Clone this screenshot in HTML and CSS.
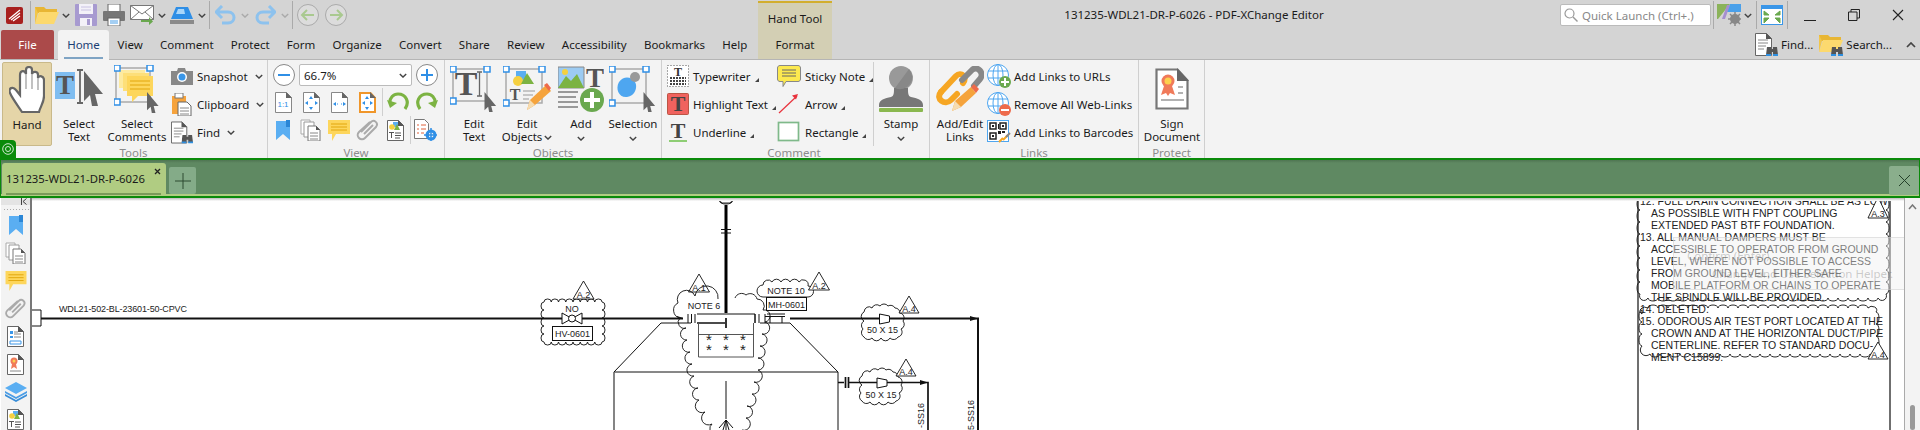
FILE: index.html
```html
<!DOCTYPE html>
<html lang="en">
<head>
    <meta charset="UTF-8">
    <title>131235-WDL21-DR-P-6026 - PDF-XChange Editor</title>
    <link rel="stylesheet" href="styles.css">
</head>
<body>
    <svg class="defs">
        <symbol id="chev" viewBox="0 0 10 6"><polyline points="1,1 5,5 9,1" fill="none" stroke="#444" stroke-width="1.7"/></symbol>
        <symbol id="chev-pale" viewBox="0 0 10 6"><polyline points="1,1 5,5 9,1" fill="none" stroke="#aaa" stroke-width="1.7"/></symbol>
        <symbol id="corner" viewBox="0 0 4 4"><polygon points="4,0 4,4 0,4" fill="#444"/></symbol>
        <symbol id="cursor" viewBox="0 0 20 36"><polygon points="1,0 20,23 12,23 15,35 9,35 7,24 1,30" fill="#666"/></symbol>
        <symbol id="binoc" viewBox="0 0 12 12"><path d="M1 3h4v2h2V3h4l1 8H7V8H5v3H0z" fill="#555"/><path d="M0 10h5v2H0zM7 10h5v2H7z" fill="#2e8fe0"/></symbol>
        <symbol id="bookmark" viewBox="0 0 14 20"><polygon points="0,1 14,1 14,20 7,14 0,20" fill="#5aaef2"/><polygon points="10,0 14,0 14,7 10,7" fill="#2a86d6"/></symbol>
        <symbol id="pages" viewBox="0 0 22 22"><path d="M1 1h9v14H1z" fill="#fff" stroke="#aaa"/><path d="M4 3h10v15H4z" fill="#fff" stroke="#999"/><path d="M8 7h8l4 4v11H8z" fill="#fff" stroke="#777"/><path d="M10 14h8M10 17h8M10 20h8" stroke="#888"/><path d="M16 7l4 4h-4z" fill="#555"/></symbol>
        <symbol id="note" viewBox="0 0 22 21"><path d="M0 0h22v14H8l-4 7v-7H0z" fill="#fdd65c"/><path d="M3 4h16M3 7h16M3 10h16" stroke="#e2a60c"/></symbol>
        <symbol id="clip" viewBox="0 0 23 22"><path d="M5 13l10-10c3-3 8 1 5 5L9 19c-4 4-10-2-6-6L14 3M8 15l9-9" fill="none" stroke="#aaa" stroke-width="2"/></symbol>
        <symbol id="form-doc" viewBox="0 0 17 21"><path d="M.5.5h11l5 5v15H.5z" fill="#fff" stroke="#666"/><path d="M11 0l6 6h-6z" fill="#555"/><path d="M3 5h3v3H3zM3 10h3v2H3z" fill="#3a96e8"/><path d="M7 6h4M7 8h7M7 11h7" stroke="#888"/><path d="M3 15h11v3H3z" fill="#fff" stroke="#3a96e8"/></symbol>
        <symbol id="cert-doc" viewBox="0 0 17 21"><path d="M.5.5h11l5 5v15H.5z" fill="#fff" stroke="#666"/><path d="M11 0l6 6h-6z" fill="#555"/><circle cx="7" cy="7" r="3.5" fill="#f07a5a"/><circle cx="7" cy="7" r="1.5" fill="#fcd04e"/><path d="M5 10l-1 5 3-2 3 2-1-5z" fill="#f07a5a"/><path d="M3 17h11" stroke="#888"/></symbol>
        <symbol id="shapes-doc" viewBox="0 0 17 21"><path d="M.5.5h11l5 5v15H.5z" fill="#fff" stroke="#666"/><path d="M11 0l6 6h-6z" fill="#555"/><rect x="6" y="2" width="5" height="5" fill="#5aaef2"/><circle cx="5" cy="7" r="2.800" fill="#f5d040"/><polygon points="7,10 10,4 13,10" fill="#7cb342"/><path d="M2 12.500h5M4.500 12.500v5.500M8 13h6M8 15.500h6M8 18h5" stroke="#555"/></symbol>
    </svg>

    <div class="top">
        <div class="titlebar">
            <div class="qat">
                <svg class="logo" width="17" height="17" viewBox="0 0 17 17"><rect width="17" height="17" rx="2" fill="#a8201f"/><path d="M3 12L14 3M5 13l9-7M7 14l7-5" stroke="#fff" stroke-width="1.3"/></svg>
                <span class="qat-sep first"></span>
                <svg class="qat-icon folder" width="24" height="20" viewBox="0 0 24 20"><path d="M0 2h9l2 2h11v4H0z" fill="#e8b634"/><path d="M0 19L4 7h20l-5 12z" fill="#fcd96e"/><path d="M0 2v17l3-11z" fill="#f2c64a"/></svg>
                <svg class="mini" width="8" height="5"><use href="#chev"/></svg>
                <svg class="qat-icon save" width="22" height="22" viewBox="0 0 22 22"><rect width="22" height="22" rx="1" fill="#a79ad0"/><rect x="4" y="0" width="14" height="10" fill="#f3f1f8"/><path d="M6 3h10M6 6h10" stroke="#c9c2e2"/><rect x="5" y="14" width="12" height="8" fill="#f3f1f8"/><rect x="12" y="15" width="3" height="6" fill="#a79ad0"/></svg>
                <svg class="qat-icon print" width="22" height="22" viewBox="0 0 22 22"><rect x="5" y="0" width="12" height="8" fill="#fff" stroke="#666"/><rect x="0" y="7" width="22" height="10" rx="1" fill="#777"/><rect x="5" y="14" width="12" height="8" fill="#fff" stroke="#666"/><path d="M7 17h8M7 19h8" stroke="#4a9fe8"/></svg>
                <svg class="qat-icon mail" width="24" height="20" viewBox="0 0 24 20"><path d="M.5.5h23v14H.5z" fill="#fff" stroke="#777"/><path d="M.5.5L12 9 23.5.5M.5 14.5L9 7M23.5 14.5L15 7" fill="none" stroke="#777"/><path d="M11 15h8v-3l4 4.500-4 3.500v-3h-8z" fill="#6aa84f"/></svg>
                <svg class="mini" width="8" height="5"><use href="#chev"/></svg>
                <svg class="qat-icon cloud" width="24" height="17" viewBox="0 0 24 17"><path d="M6 0h12l5 12H1z" fill="#2e8ee6"/><path d="M8 2h6l1 5H6z" fill="#a9d6fa"/><rect x="0" y="13" width="24" height="4" fill="#8a8a8a"/></svg>
                <svg class="mini" width="8" height="5"><use href="#chev"/></svg>
                <span class="qat-sep"></span>
                <svg class="qat-icon undo" width="21" height="20" viewBox="0 0 21 20"><path d="M1 7h12c8 0 8 11 0 11H7M7 1L1 7l6 6" fill="none" stroke="#8dc2ee" stroke-width="3"/></svg>
                <svg class="mini" width="8" height="5"><use href="#chev-pale"/></svg>
                <svg class="qat-icon redo" width="21" height="20" viewBox="0 0 21 20"><path d="M20 7H8C0 7 0 18 8 18h6M14 1l6 6-6 6" fill="none" stroke="#8dc2ee" stroke-width="3"/></svg>
                <svg class="mini" width="8" height="5"><use href="#chev-pale"/></svg>
                <span class="qat-sep"></span>
                <svg class="qat-icon back" width="22" height="22" viewBox="0 0 22 22"><circle cx="11" cy="11" r="10.500" fill="#dcdcdc" stroke="#aaa"/><path d="M17 11H6M10 6l-5 5 5 5" fill="none" stroke="#a9c98f" stroke-width="2"/></svg>
                <svg class="qat-icon fwd" width="22" height="22" viewBox="0 0 22 22"><circle cx="11" cy="11" r="10.500" fill="#dcdcdc" stroke="#aaa"/><path d="M5 11h11M12 6l5 5-5 5" fill="none" stroke="#a9c98f" stroke-width="2"/></svg>
            </div>
            <div class="ctx-head">Hand Tool</div>
            <div class="doc-title">131235-WDL21-DR-P-6026 - PDF-XChange Editor</div>
            <div class="win-tools">
                <div class="quick">
                    <svg width="14" height="14" viewBox="0 0 14 14"><circle cx="5.500" cy="5.500" r="4.500" fill="none" stroke="#999" stroke-width="1.200"/><path d="M9 9l4.500 4.500" stroke="#999" stroke-width="1.400"/></svg>
                    <span>Quick Launch (Ctrl+.)</span>
                </div>
                <span class="qat-sep"></span>
                <svg class="ui-icon" width="24" height="22" viewBox="0 0 24 22"><path d="M0 0h13L1 15H0z" fill="#8bb35a"/><path d="M13 0h11v8H9z" fill="#4aa0ea"/><path d="M10 1h3l-5 14H5z" fill="#a58fd0"/><circle cx="18" cy="15" r="5" fill="#888"/><circle cx="18" cy="15" r="2" fill="#d4d4d4"/><path d="M18 8v14M11 15h14M13 10l10 10M23 10L13 20" stroke="#888" stroke-width="1.500"/></svg>
                <svg class="mini" width="8" height="5"><use href="#chev"/></svg>
                <span class="qat-sep"></span>
                <svg class="ui-icon full" width="22" height="20" viewBox="0 0 22 20"><rect x=".5" y=".5" width="21" height="19" fill="#fff" stroke="#3a96e8"/><rect x="1" y="1" width="20" height="3" fill="#3a96e8"/><path d="M3 6l5 4-5 0zM19 6l-5 4 5 0zM3 18l5-5-5 0zM19 18l-5-5 5 0z" fill="#6aa84f" stroke="#6aa84f"/></svg>
                <span class="qat-sep"></span>
                <div class="win-btns">
                    <svg width="12" height="12" viewBox="0 0 12 12"><path d="M0 11.500h12" stroke="#222"/></svg>
                    <svg width="12" height="12" viewBox="0 0 12 12"><path d="M.5 3h8.500v8.500H.5zM3 3V.5h8.500V9H9" fill="none" stroke="#222"/></svg>
                    <svg width="12" height="12" viewBox="0 0 12 12"><path d="M1 1l10 10M11 1L1 11" stroke="#222" stroke-width="1.100"/></svg>
                </div>
            </div>
        </div>
        <div class="tabs">
            <div class="tab-list">
                <div class="tab-file">File</div>
                <div class="tab tab-home"><span>Home</span></div>
                <div class="tab">View</div>
                <div class="tab">Comment</div>
                <div class="tab">Protect</div>
                <div class="tab">Form</div>
                <div class="tab">Organize</div>
                <div class="tab">Convert</div>
                <div class="tab">Share</div>
                <div class="tab">Review</div>
                <div class="tab">Accessibility</div>
                <div class="tab">Bookmarks</div>
                <div class="tab">Help</div>
            </div>
            <div class="ctx-tab">Format</div>
            <div class="tab-right">
                <svg width="23" height="23" viewBox="0 0 23 23"><path d="M.5.5h11l5 5v17H.5z" fill="#fff" stroke="#666"/><path d="M11 0l6 6h-6z" fill="#555"/><path d="M3 7h10M3 10h10M3 13h8M3 16h6" stroke="#888"/><use href="#binoc" x="11" y="11" width="12" height="12"/></svg>
                <span class="find">Find...</span>
                <svg width="24" height="23" viewBox="0 0 24 23"><path d="M0 2h9l2 2h11v4H0z" fill="#e8b634"/><path d="M0 19L4 7h20l-5 12z" fill="#fcd96e"/><path d="M0 2v17l3-11z" fill="#f2c64a"/><use href="#binoc" x="12" y="11" width="12" height="12"/></svg>
                <span>Search...</span>
                <svg class="collapse" width="10" height="6"><polyline points="1,5 5,1 9,5" fill="none" stroke="#444" stroke-width="1.700"/></svg>
            </div>
        </div>
    </div>

    <div class="ribbon">
        <section class="group g-tools">
            <div class="group-body">
                <div class="big hand">
                    <div class="big-icon">
                        <svg width="36" height="48" viewBox="0 0 36 48"><path d="M13 46C9 40 3 32 1 27c-2-5 3-7 6-3l4 5V9c0-5 5-5 6-1V4c0-4 6-4 6 0v4c1-3 6-3 6 1v3c1-3 6-2 6 2v16c0 7-4 11-5 16z" fill="#fff" stroke="#666" stroke-width="2.200"/><path d="M17 8v15M23 8v15M29 12v12" stroke="#999" stroke-width="1.200"/></svg>
                    </div>
                    <span>Hand</span>
                </div>
                <div class="big w-select-text">
                    <div class="big-icon">
                        <svg width="48" height="40" viewBox="0 0 48 40"><rect x="0" y="3" width="20" height="27" fill="#7fbdf0"/><text x="10" y="25" class="svg-t t-big">T</text><path d="M22 1h6M25 1v33M22 34h6" stroke="#666" stroke-width="1.800" fill="none"/><use href="#cursor" x="28" y="2" width="20" height="36"/></svg>
                    </div>
                    <span>Select<br>Text</span>
                </div>
                <div class="big w-select-comments">
                    <div class="big-icon">
                        <svg width="47" height="48" viewBox="0 0 47 48"><path d="M2 3h34v34H2z" fill="none" stroke="#aaa" stroke-width="1.500"/><rect x="5" y="5" width="26" height="18" fill="#fdeaa0"/><rect x="9" y="8" width="26" height="18" fill="#fddf7a"/><path d="M13 11h26v20H24l-6 6v-6h-5z" fill="#fdd65c"/><path d="M16 16h20M16 20h20M16 24h20" stroke="#e2a60c"/><rect x="0" y="0" width="6" height="6" fill="#fff" stroke="#2f8fe6" stroke-width="1.500"/><rect x="33" y="0" width="6" height="6" fill="#fff" stroke="#2f8fe6" stroke-width="1.500"/><rect x="0" y="34" width="6" height="6" fill="#fff" stroke="#2f8fe6" stroke-width="1.500"/><use href="#cursor" x="31" y="27" width="15" height="22"/></svg>
                    </div>
                    <span>Select<br>Comments</span>
                </div>
                <div class="small-col c-tools">
                    <div class="small"><svg width="22" height="17" viewBox="0 0 22 17"><path d="M0 3h6l1-3h7l1 3h7v14H0z" fill="#888"/><circle cx="11" cy="9" r="5" fill="#fff"/><circle cx="11" cy="9" r="3.500" fill="#3a96e8"/></svg><span>Snapshot</span><svg class="mini" width="8" height="5"><use href="#chev"/></svg></div>
                    <div class="small"><svg width="22" height="23" viewBox="0 0 22 23"><rect x="1" y="3" width="14" height="18" fill="#f6a33c"/><rect x="4" y="0" width="8" height="5" fill="#fff" stroke="#777"/><path d="M7 9h9l4 4v10H7z" fill="#fff" stroke="#666"/><path d="M9 15h9M9 18h9M9 21h9" stroke="#888"/></svg><span>Clipboard</span><svg class="mini" width="8" height="5"><use href="#chev"/></svg></div>
                    <div class="small"><svg width="22" height="23" viewBox="0 0 23 23"><path d="M.5.5h11l5 5v17H.5z" fill="#fff" stroke="#666"/><path d="M11 0l6 6h-6z" fill="#555"/><path d="M3 7h10M3 10h10M3 13h8M3 16h6" stroke="#888"/><use href="#binoc" x="11" y="11" width="12" height="12"/></svg><span>Find</span><svg class="mini" width="8" height="5"><use href="#chev"/></svg></div>
                </div>
            </div>
            <div class="group-label">Tools</div>
        </section>

        <section class="group g-view">
            <div class="group-body view-body">
                <div class="zoom-row">
                    <svg width="22" height="22" viewBox="0 0 22 22"><circle cx="11" cy="11" r="10.500" fill="#fff" stroke="#888"/><path d="M5 11h12" stroke="#2f8fe6" stroke-width="2"/></svg>
                    <div class="combo"><span>66.7%</span><svg width="8" height="5"><use href="#chev"/></svg></div>
                    <svg width="22" height="22" viewBox="0 0 22 22"><circle cx="11" cy="11" r="10.500" fill="#fff" stroke="#888"/><path d="M5 11h12M11 5v12" stroke="#2f8fe6" stroke-width="2"/></svg>
                </div>
                <div class="icon-row">
                    <div class="cell"><svg width="17" height="21" viewBox="0 0 17 21"><path d="M.5.5h11l5 5v15H.5z" fill="#fff" stroke="#888"/><path d="M11 0l6 6h-6z" fill="#666"/><text x="8" y="15" class="svg-t t-one">1:1</text></svg></div>
                    <div class="cell"><svg width="17" height="21" viewBox="0 0 17 21"><path d="M.5.5h11l5 5v15H.5z" fill="#fff" stroke="#888"/><path d="M11 0l6 6h-6z" fill="#666"/><path d="M8 4l2 3H6zM8 18l2-3H6zM2 11l3-2v4zM15 11l-3-2v4z" fill="#2f8fe6"/></svg></div>
                    <div class="cell"><svg width="17" height="21" viewBox="0 0 17 21"><path d="M.5.5h11l5 5v15H.5z" fill="#fff" stroke="#888"/><path d="M11 0l6 6h-6z" fill="#666"/><path d="M2 12l3-2v4zM15 12l-3-2v4zM6 11.500h1v1H6zM10 11.500h1v1h-1z" fill="#2f8fe6"/></svg></div>
                    <div class="cell"><svg width="17" height="21" viewBox="0 0 17 21"><path d="M1 1h10.500l4.500 5v14H1z" fill="#fff" stroke="#f0962a" stroke-width="2"/><path d="M11 0l6 6h-6z" fill="#666"/><path d="M8 4l2 3H6zM8 18l2-3H6zM3 11l3-2v4zM14 11l-3-2v4z" fill="#2f8fe6"/></svg></div>
                    <span class="v-sep"></span>
                    <div class="cell wide"><svg width="22" height="20" viewBox="0 0 22 20"><path d="M18 17c5-7 1-15-7-15C6 2 3 6 3 10" fill="none" stroke="#7cb342" stroke-width="3.200"/><path d="M0 8l3 8 7-5z" fill="#7cb342"/></svg></div>
                    <div class="cell wide"><svg width="22" height="20" viewBox="0 0 22 20"><path d="M4 17C-1 10 3 2 11 2c5 0 8 4 8 8" fill="none" stroke="#7cb342" stroke-width="3.200"/><path d="M22 8l-3 8-7-5z" fill="#7cb342"/></svg></div>
                </div>
                <div class="icon-row">
                    <div class="cell"><svg width="14" height="20"><use href="#bookmark"/></svg></div>
                    <div class="cell"><svg width="22" height="22"><use href="#pages"/></svg></div>
                    <div class="cell"><svg width="22" height="21"><use href="#note"/></svg></div>
                    <div class="cell"><svg width="23" height="22"><use href="#clip"/></svg></div>
                    <div class="cell"><svg width="17" height="21"><use href="#shapes-doc"/></svg></div>
                    <span class="v-sep"></span>
                    <div class="cell wide"><svg width="23" height="22" viewBox="0 0 23 22"><path d="M.5.5h10l4 4v15H.5z" fill="#fff" stroke="#777"/><path d="M3 6h2M7 6h5M3 10h2M7 10h5M3 14h2M7 14h3" stroke="#e0623c"/><circle cx="17" cy="16" r="4" fill="none" stroke="#2f8fe6" stroke-width="3"/><path d="M17 9v14M10 16h14" stroke="#2f8fe6" stroke-width="1.500"/></svg></div>
                </div>
            </div>
            <div class="group-label">View</div>
        </section>

        <section class="group g-objects">
            <div class="group-body">
                <div class="big w-edit-text">
                    <div class="big-icon">
                        <svg width="48" height="46" viewBox="0 0 48 46"><path d="M3 3h34v32H3z" fill="none" stroke="#aaa" stroke-width="1.500"/><text x="16" y="29" class="svg-t t-huge">T</text><path d="M27 6h5M29.500 6v24M27 30h5" stroke="#666" stroke-width="1.300" fill="none"/><rect x="0" y="0" width="6" height="6" fill="#fff" stroke="#2f8fe6" stroke-width="1.500"/><rect x="0" y="32" width="6" height="6" fill="#fff" stroke="#2f8fe6" stroke-width="1.500"/><rect x="34" y="0" width="6" height="6" fill="#fff" stroke="#2f8fe6" stroke-width="1.500"/><use href="#cursor" x="32" y="26" width="16" height="22"/></svg>
                    </div>
                    <span>Edit<br>Text</span>
                </div>
                <div class="big w-edit-objects">
                    <div class="big-icon">
                        <svg width="48" height="46" viewBox="0 0 48 46"><path d="M3 3h36v34H3z" fill="none" stroke="#aaa" stroke-width="1.500"/><rect x="13" y="5" width="10" height="10" fill="#5aaef2"/><circle cx="15" cy="15" r="5" fill="#f5d040"/><polygon points="18,18 24,7 31,18" fill="#7cb342"/><text x="12" y="34" class="svg-t t-mid">T</text><path d="M20 25h12M20 29h10M20 33h6" stroke="#999"/><rect x="0" y="0" width="6" height="6" fill="#fff" stroke="#2f8fe6" stroke-width="1.500"/><rect x="36" y="0" width="6" height="6" fill="#fff" stroke="#2f8fe6" stroke-width="1.500"/><rect x="0" y="34" width="6" height="6" fill="#fff" stroke="#2f8fe6" stroke-width="1.500"/><path d="M24 44l3-10 16-15 5 6-16 14z" fill="#f5a33c"/><path d="M41 19l3-2 4 5-2 3z" fill="#ee6a4a"/><path d="M24 44l3-10 5 5z" fill="#f6dcb0"/></svg>
                    </div>
                    <span>Edit<br>Objects<svg class="inline-chev" width="8" height="5"><use href="#chev"/></svg></span>
                </div>
                <div class="big w-add">
                    <div class="big-icon">
                        <svg width="46" height="46" viewBox="0 0 46 46"><path d="M0 1h26v21H0z" fill="#9ccbf2" stroke="#888"/><polygon points="0,22 8,10 13,15 19,8 26,22" fill="#7cb342"/><circle cx="7" cy="6" r="3" fill="#f5d040"/><text x="37" y="21" class="svg-t t-big">T</text><path d="M0 26h20M0 31h18M0 36h20M0 41h20" stroke="#999" stroke-width="2"/><circle cx="34" cy="34" r="12" fill="#6aa84f"/><path d="M34 26v16M26 34h16" stroke="#fff" stroke-width="4"/></svg>
                    </div>
                    <span>Add</span>
                    <svg class="below-chev" width="8" height="5"><use href="#chev"/></svg>
                </div>
                <div class="big w-selection">
                    <div class="big-icon">
                        <svg width="48" height="46" viewBox="0 0 48 46"><path d="M3 3h34v34H3z" fill="none" stroke="#aaa" stroke-width="1.500"/><path d="M10 16c5-7 13-5 16 0 3 5 0 14-8 15-8 1-12-8-8-15z" fill="#4ea6f0"/><circle cx="26" cy="11" r="5" fill="#999"/><rect x="0" y="0" width="6" height="6" fill="#fff" stroke="#2f8fe6" stroke-width="1.500"/><rect x="34" y="0" width="6" height="6" fill="#fff" stroke="#2f8fe6" stroke-width="1.500"/><rect x="0" y="34" width="6" height="6" fill="#fff" stroke="#2f8fe6" stroke-width="1.500"/><use href="#cursor" x="32" y="26" width="16" height="22"/></svg>
                    </div>
                    <span>Selection</span>
                    <svg class="below-chev" width="8" height="5"><use href="#chev"/></svg>
                </div>
            </div>
            <div class="group-label">Objects</div>
        </section>

        <section class="group g-comment">
            <div class="group-body">
                <div class="small-col c-comment-a">
                    <div class="small"><svg width="22" height="22" viewBox="0 0 22 22"><rect x=".5" y=".5" width="21" height="21" fill="#fff" stroke="#555" stroke-dasharray="1 2"/><text x="11" y="11" class="svg-t t-small">T</text><path d="M3 13h16M3 16h16M3 19h16" stroke="#444" stroke-width="1.800" stroke-dasharray="2 1"/></svg><span>Typewriter</span><svg class="corner" width="4" height="4"><use href="#corner"/></svg></div>
                    <div class="small"><svg width="22" height="22" viewBox="0 0 22 22"><rect x=".5" y=".5" width="21" height="21" rx="1" fill="#f0625e" stroke="#b54"/><text x="11" y="18" class="svg-t t-mark">T</text></svg><span>Highlight Text</span><svg class="corner" width="4" height="4"><use href="#corner"/></svg></div>
                    <div class="small"><svg width="22" height="22" viewBox="0 0 22 22"><text x="11" y="17" class="svg-t t-mark">T</text><path d="M2 20h18" stroke="#6cc04a" stroke-width="1.500"/></svg><span>Underline</span><svg class="corner" width="4" height="4"><use href="#corner"/></svg></div>
                </div>
                <div class="small-col c-comment-b">
                    <div class="small"><svg width="24" height="22" viewBox="0 0 24 22"><path d="M3 .5h18c1.500 0 2.500 1 2.500 2.500v11c0 1.500-1 2.500-2.500 2.500H9L6 21.500v-5H3C1.500 16.500.5 15.500.500 14V3C.5 1.500 1.500.5 3 .5z" fill="#fce94f" stroke="#888"/><path d="M5 5h14M5 8h14M5 11h14" stroke="#666"/></svg><span>Sticky Note</span><svg class="corner" width="4" height="4"><use href="#corner"/></svg></div>
                    <div class="small"><svg width="24" height="22" viewBox="0 0 24 22"><path d="M2 20L20 3" stroke="#e8323c" stroke-width="1.200"/><path d="M21 1l-6 1.500 4 4z" fill="#e8323c"/></svg><span>Arrow</span><svg class="corner" width="4" height="4"><use href="#corner"/></svg></div>
                    <div class="small"><svg width="24" height="22" viewBox="0 0 24 22"><rect x="1.500" y="1.500" width="20" height="18" fill="#fff" stroke="#7fb98a" stroke-width="1.700"/></svg><span>Rectangle</span><svg class="corner" width="4" height="4"><use href="#corner"/></svg></div>
                </div>
                <span class="stamp-sep"></span>
                <div class="big w-stamp">
                    <div class="big-icon">
                        <svg width="44" height="47" viewBox="0 0 44 47"><circle cx="22" cy="12" r="12" fill="#999"/><path d="M15 22h14c0 5 0 8 3 9 6 1 12 3 12 8v2H0v-2c0-5 6-7 12-8 3-1 3-4 3-9z" fill="#777"/><path d="M30 3a12 12 0 0 1-14 19z" fill="#888"/><rect x="0" y="42" width="44" height="4" rx="1" fill="#8ab84f"/></svg>
                    </div>
                    <span>Stamp</span>
                    <svg class="below-chev" width="8" height="5"><use href="#chev"/></svg>
                </div>
            </div>
            <div class="group-label comment-label">Comment</div>
        </section>

        <section class="group g-links">
            <div class="group-body">
                <div class="big w-link">
                    <div class="big-icon">
                        <svg width="48" height="47" viewBox="0 0 48 47"><path d="M5 26L20 10c5-5 12 1 7 7" fill="none" stroke="#f6a623" stroke-width="6" stroke-linecap="round"/><path d="M5 26c-6 7 4 14 10 8l6-6" fill="none" stroke="#f6a623" stroke-width="6" stroke-linecap="round"/><path d="M26 14L36 4c5-5 13 3 8 9l-6 7" fill="none" stroke="#888" stroke-width="6" stroke-linecap="round"/><path d="M16 45l3-10 16-14 5 6-15 14z" fill="#f5a33c"/><path d="M35 21l3-3 5 5-3 4z" fill="#ee6a4a"/><path d="M16 45l3-10 6 6z" fill="#f6dcb0"/></svg>
                    </div>
                    <span>Add/Edit<br>Links</span>
                </div>
                <div class="small-col c-links">
                    <div class="small"><svg width="24" height="24" viewBox="0 0 24 24"><circle cx="11" cy="11" r="10.500" fill="#fff" stroke="#4ea6f0"/><ellipse cx="11" cy="11" rx="5" ry="10.500" fill="none" stroke="#4ea6f0"/><path d="M1 7h20M1 14h20M11 0v22" stroke="#4ea6f0"/><circle cx="18" cy="18" r="6" fill="#6aa84f"/><path d="M18 14v8M14 18h8" stroke="#fff" stroke-width="2"/></svg><span>Add Links to URLs</span></div>
                    <div class="small"><svg width="24" height="24" viewBox="0 0 24 24"><circle cx="11" cy="11" r="10.500" fill="#fff" stroke="#4ea6f0"/><ellipse cx="11" cy="11" rx="5" ry="10.500" fill="none" stroke="#4ea6f0"/><path d="M1 7h20M1 14h20M11 0v22" stroke="#4ea6f0"/><circle cx="18" cy="18" r="6" fill="#ee6a4a"/><path d="M14 18h8" stroke="#fff" stroke-width="2"/></svg><span>Remove All Web-Links</span></div>
                    <div class="small"><svg width="24" height="24" viewBox="0 0 24 24"><rect x=".5" y=".5" width="21" height="21" fill="#fff" stroke="#4ea6f0"/><path d="M3 3h6v6H3zM13 3h6v6h-6zM3 13h6v6H3z" fill="none" stroke="#222" stroke-width="1.500"/><path d="M5 5h2v2H5zM15 5h2v2h-2zM5 15h2v2H5zM11 11h3v3h-3zM11 4h1v5h-1zM15 11h3v2h-3z" fill="#222"/><path d="M12 22l4-4M16 20l5-5" stroke="#f6a623" stroke-width="2"/><path d="M19 17l4-4" stroke="#888" stroke-width="2"/></svg><span>Add Links to Barcodes</span></div>
                </div>
            </div>
            <div class="group-label">Links</div>
        </section>

        <section class="group g-protect">
            <div class="group-body">
                <div class="big w-sign">
                    <div class="big-icon">
                        <svg width="34" height="42" viewBox="0 0 34 42"><path d="M1.500 1.500h21l10 11v28h-31z" fill="#fff" stroke="#777" stroke-width="2.200"/><path d="M22 0l12 13H22z" fill="#666"/><circle cx="13" cy="13" r="6.500" fill="#f07a5a"/><circle cx="13" cy="13" r="3.500" fill="#fcd04e"/><path d="M9 18l-3 9 5-2 2 3 2-3 5 2-3-9z" fill="#f07a5a"/><path d="M23 19h5M23 25h5M6 32h23" stroke="#999" stroke-width="1.500"/></svg>
                    </div>
                    <span>Sign<br>Document</span>
                </div>
            </div>
            <div class="group-label">Protect</div>
        </section>
    </div>

    <div class="band">
        <div class="doc-tab">
            <span class="doc-name">131235-WDL21-DR-P-6026</span>
            <svg class="doc-close" width="7" height="7" viewBox="0 0 7 7"><path d="M1 1l5 5M6 1L1 6" stroke="#222" stroke-width="1.300"/></svg>
        </div>
        <div class="new-tab"><svg width="16" height="16" viewBox="0 0 16 16"><path d="M8 0v16M0 8h16" stroke="#2c4a30"/></svg></div>
        <div class="band-close"><svg width="13" height="13" viewBox="0 0 13 13"><path d="M1 1l11 11M12 1L1 12" stroke="#24402a"/></svg></div>
    </div>
    <div class="target">
        <svg width="12" height="12" viewBox="0 0 12 12"><circle cx="6" cy="6" r="5.300" fill="none" stroke="#cfe8cf"/><circle cx="6" cy="6" r="2.500" fill="none" stroke="#cfe8cf"/></svg>
    </div>

    <div class="main">
        <aside class="side">
            <div class="side-head"><svg width="6" height="7" viewBox="0 0 6 7"><path d="M.5 0v7M5.500 .5l-3.500 3 3.500 3" fill="none" stroke="#444"/></svg></div>
            <div class="side-grip"></div>
            <svg width="14" height="20" class="s1"><use href="#bookmark"/></svg>
            <svg width="22" height="22"><use href="#pages"/></svg>
            <svg width="22" height="20"><use href="#note"/></svg>
            <svg width="23" height="21"><use href="#clip"/></svg>
            <svg width="17" height="21"><use href="#form-doc"/></svg>
            <svg width="17" height="21"><use href="#cert-doc"/></svg>
            <svg width="22" height="20" viewBox="0 0 22 20"><path d="M11 0l11 6-11 6L0 6z" fill="#5aaef2"/><path d="M0 9l11 6 11-6v2l-11 6L0 11z" fill="#4a9de6"/><path d="M0 12l11 6 11-6v2l-11 6L0 14z" fill="#3a8ed8"/></svg>
            <svg width="17" height="21"><use href="#shapes-doc"/></svg>
        </aside>
        <div class="canvas">
            <svg class="sheet" width="1873" height="232" viewBox="32 198 1873 232">
                <!-- left run -->
                <path d="M32 310h9v16h-9" class="ln"/>
                <text x="59" y="312" class="dwg" textLength="128">WDL21-502-BL-23601-50-CPVC</text>
                <path d="M41 318.500H683" class="pipe"/>
                <path d="M562 313l20 11v-11l-20 11z" class="ln w"/>
                <circle cx="572" cy="318.500" r="3.500" class="ln w"/>
                <path d="M544 302a3 4 0 0 0 0 8a3 4 0 0 0 0 8a3 4 0 0 0 0 8a3 4 0 0 0 0 8a3 4 0 0 0 0 8a3.600 3 0 0 0 7.250 0a3.600 3 0 0 0 7.250 0a3.600 3 0 0 0 7.250 0a3.600 3 0 0 0 7.250 0a3.600 3 0 0 0 7.250 0a3.600 3 0 0 0 7.250 0a3.600 3 0 0 0 7.250 0a3.600 3 0 0 0 7.250 0a3 4 0 0 0 0 -8a3 4 0 0 0 0 -8a3 4 0 0 0 0 -8a3 4 0 0 0 0 -8a3 4 0 0 0 0 -8a3.600 3 0 0 0 -7.250 0a3.600 3 0 0 0 -7.250 0a3.600 3 0 0 0 -7.250 0a3.600 3 0 0 0 -7.250 0a3.600 3 0 0 0 -7.250 0a3.600 3 0 0 0 -7.250 0a3.600 3 0 0 0 -7.250 0a3.600 3 0 0 0 -7.250 0z" class="ln thin"/>
                <text x="572" y="312" class="dwg mid">NO</text>
                <rect x="552.500" y="326.500" width="40" height="14" class="ln w"/>
                <text x="572.500" y="337" class="dwg mid">HV-0601</text>
                <path d="M583.500 281l10.500 18h-21z" class="ln w thin"/>
                <text x="583.500" y="297.500" class="dwg mid">A.2</text>

                <!-- vent and tank -->
                <path d="M726 204a6 3 0 1 0 -4 -1h8a6 3 0 1 0 -4 1z" class="ln thin"/>
                <path d="M726 205V313" class="riser"/>
                <path d="M721 229.500h10M721 233h10" class="ln"/>
                <path d="M699 274l10.500 18h-21z" class="ln w thin"/>
                <text x="699" y="290.500" class="dwg mid">A.1</text>
                <path d="M712 424A6 6 0 0 1 705 412A6 6 0 0 1 699 400A6 6 0 0 1 698 388A6 6 0 0 1 694 376A6 6 0 0 1 692 364A6 6 0 0 1 690 352A6 6 0 0 1 687 340A6 6 0 0 1 686 328A6 6 0 0 1 680 318A8 8 0 0 1 678 303A8 8 0 0 1 695 296A8 8 0 0 1 718 299M735 298A7 7 0 0 1 746 295A7 7 0 0 1 757 299A7 7 0 0 1 763 310A6 6 0 0 1 765 322A6 6 0 0 1 762 334A6 6 0 0 1 760 346A6 6 0 0 1 758 358A6 6 0 0 1 758 370A6 6 0 0 1 754 382A6 6 0 0 1 752 394A6 6 0 0 1 747 406A6 6 0 0 1 746 418A6 6 0 0 1 742 430M712 424A6 6 0 0 0 710 430" class="ln thin"/>
                <text x="704" y="309" class="dwg mid">NOTE 6</text>
                <path d="M677 316.500l6 2M683 318.500h-6" class="ln"/>
                <path d="M688 314v9M691.500 314v9M695 314v9M697 314h58v9M755 314v9M759 314v9M765 314v9" class="ln"/>
                <path d="M697 323h28M726 318v10" class="pipe-s"/>
                <path d="M661 323h30M760 323h30M661 323L614 372H838L790 323" class="ln"/>
                <path d="M614 372V430" class="ln heavy"/>
                <path d="M838 372V430" class="ln"/>
                <path d="M698.500 323v34h55v-34M698.500 334.500h55" class="ln gray"/>
                <text x="709" y="345" class="dwg mid star">*</text>
                <text x="726" y="345" class="dwg mid star">*</text>
                <text x="743" y="345" class="dwg mid star">*</text>
                <text x="709" y="355" class="dwg mid star">*</text>
                <text x="726" y="355" class="dwg mid star">*</text>
                <text x="743" y="355" class="dwg mid star">*</text>
                <path d="M726 381v38M726 420l-7 8M726 420l7 8M726 420v10M726 420l-3 10M726 420l3 10" class="ln"/>

                <!-- manhole -->
                <path d="M763 297a4 4 0 0 1 0 -12a5 5 0 0 1 9 -3a5 5 0 0 1 9 0a5 5 0 0 1 9 0a5 5 0 0 1 9 0a5 5 0 0 1 9 4a4 4 0 0 1 0 11z" class="ln thin"/>
                <text x="786" y="294" class="dwg mid">NOTE 10</text>
                <rect x="766.500" y="297.500" width="40" height="13" class="ln w"/>
                <text x="786.500" y="308" class="dwg mid">MH-0601</text>
                <path d="M767 314h18M765 316.500h20M770 317v6M782 317v6" class="ln"/>
                <path d="M819 272l10.500 18h-21z" class="ln w thin"/>
                <text x="819" y="288.500" class="dwg mid">A.2</text>

                <!-- right branch, upper -->
                <path d="M790 318.500H978V430" class="pipe"/>
                <path d="M970 316l8 2.500-8 2.500z" class="fill"/>
                <path d="M864 312a5 6 0 0 1 8 -4a5 5 0 0 1 8 -2a5 5 0 0 1 8 0a5 5 0 0 1 7 2a5 5 0 0 1 5 5a5 5 0 0 1 3 8a5 5 0 0 1 -2 8a5 5 0 0 1 -3 8a5 5 0 0 1 -8 1a5 5 0 0 1 -9 0a5 5 0 0 1 -9 0a5 5 0 0 1 -8 -1a5 5 0 0 1 -1 -8a5 5 0 0 1 1 -8a5 5 0 0 1 0 -9z" class="ln thin"/>
                <path d="M879.500 314l10 2v6l-10 2z" class="ln w"/>
                <text x="882.500" y="333" class="dwg mid">50 X 15</text>
                <path d="M909 296l10 17h-20z" class="ln w thin"/>
                <text x="909" y="311.500" class="dwg mid">A.4</text>

                <!-- right branch, lower -->
                <path d="M838 382.500h6M845.500 377v11M848.500 377v11M849 382.500H928V430" class="pipe-s"/>
                <path d="M920 380l8 2.500-8 2.500z" class="fill"/>
                <path d="M862 376a5 6 0 0 1 8 -4a5 5 0 0 1 8 -2a5 5 0 0 1 8 0a5 5 0 0 1 7 2a5 5 0 0 1 5 5a5 5 0 0 1 3 8a5 5 0 0 1 -2 8a5 5 0 0 1 -3 8a5 5 0 0 1 -8 1a5 5 0 0 1 -9 0a5 5 0 0 1 -9 0a5 5 0 0 1 -8 -1a5 5 0 0 1 -1 -8a5 5 0 0 1 1 -8a5 5 0 0 1 0 -9z" class="ln thin"/>
                <path d="M877 378l10 2v6l-10 2z" class="ln w"/>
                <text x="881" y="398" class="dwg mid">50 X 15</text>
                <path d="M906 359l10 17h-20z" class="ln w thin"/>
                <text x="906" y="374.500" class="dwg mid">A.4</text>
                <text class="dwg" transform="translate(924 428) rotate(-90)">-SS16</text>
                <text class="dwg" transform="translate(974 430) rotate(-90)">5-SS16</text>

                <!-- notes column -->
                <path d="M1638 198V430M1890 198V430" class="ln mid-w"/>
                <path d="M1640 198a3 6 0 0 0 0 12a3 6 0 0 0 0 12a3 6 0 0 0 0 12a3 6 0 0 0 0 12a3 6 0 0 0 0 12a3 6 0 0 0 0 12a3 6 0 0 0 0 12a3 6 0 0 0 0 12a4 4 0 0 0 8 4a5 3 0 0 0 10 0a5 3 0 0 0 10 0a5 3 0 0 0 10 0a5 3 0 0 0 10 0a5 3 0 0 0 10 0a5 3 0 0 0 10 0a5 3 0 0 0 10 0a5 3 0 0 0 10 0a5 3 0 0 0 10 0a5 3 0 0 0 10 0a5 3 0 0 0 10 0a5 3 0 0 0 10 0a5 3 0 0 0 10 0a5 3 0 0 0 10 0a5 3 0 0 0 10 0a5 3 0 0 0 10 0a5 3 0 0 0 10 0a5 3 0 0 0 10 0a5 3 0 0 0 10 0a5 3 0 0 0 10 0a5 3 0 0 0 10 0a5 3 0 0 0 10 0a5 3 0 0 0 10 0a4 4 0 0 0 8 -4a3 6 0 0 0 0 -12a3 6 0 0 0 0 -12a3 6 0 0 0 0 -12a3 6 0 0 0 0 -12a3 6 0 0 0 0 -12a3 6 0 0 0 0 -12a3 6 0 0 0 0 -12a3 6 0 0 0 0 -12" class="ln thin"/>
                <path d="M1642 310a3 6 0 0 0 0 12a3 6 0 0 0 0 12a3 6 0 0 0 0 12a4 4 0 0 0 8 8a5 3 0 0 0 10 0a5 3 0 0 0 10 0a5 3 0 0 0 10 0a5 3 0 0 0 10 0a5 3 0 0 0 10 0a5 3 0 0 0 10 0a5 3 0 0 0 10 0a5 3 0 0 0 10 0a5 3 0 0 0 10 0a5 3 0 0 0 10 0a5 3 0 0 0 10 0a5 3 0 0 0 10 0a5 3 0 0 0 10 0a5 3 0 0 0 10 0a5 3 0 0 0 10 0a5 3 0 0 0 10 0a5 3 0 0 0 10 0a5 3 0 0 0 10 0a5 3 0 0 0 10 0a5 3 0 0 0 10 0a5 3 0 0 0 10 0a5 3 0 0 0 10 0a4 4 0 0 0 6 -6a3 6 0 0 0 0 -12a3 6 0 0 0 0 -12a3 6 0 0 0 0 -12a4 3 0 0 0 -8 -4a5 3 0 0 0 -10 0a5 3 0 0 0 -10 0a5 3 0 0 0 -10 0a5 3 0 0 0 -10 0a5 3 0 0 0 -10 0a5 3 0 0 0 -10 0a5 3 0 0 0 -10 0a5 3 0 0 0 -10 0a5 3 0 0 0 -10 0a5 3 0 0 0 -10 0a5 3 0 0 0 -10 0a5 3 0 0 0 -10 0a5 3 0 0 0 -10 0a5 3 0 0 0 -10 0a5 3 0 0 0 -10 0a5 3 0 0 0 -10 0a5 3 0 0 0 -10 0a5 3 0 0 0 -10 0a5 3 0 0 0 -10 0a5 3 0 0 0 -10 0a5 3 0 0 0 -10 0a5 3 0 0 0 -10 0a4 3 0 0 0 -6 6z" class="ln thin"/>
                <text class="note" x="1640" y="205">12. FULL DRAIN CONNECTION SHALL BE AS LOW</text>
                <text class="note" x="1651" y="217">AS POSSIBLE WITH FNPT COUPLING</text>
                <text class="note" x="1651" y="229">EXTENDED PAST BTF FOUNDATION.</text>
                <text class="note" x="1640" y="241">13. ALL MANUAL DAMPERS MUST BE</text>
                <text class="note" x="1651" y="253">ACCESSIBLE TO OPERATOR FROM GROUND</text>
                <text class="note" x="1651" y="265">LEVEL, WHERE NOT POSSIBLE TO ACCESS</text>
                <text class="note" x="1651" y="277">FROM GROUND LEVEL, EITHER SAFE</text>
                <text class="note" x="1651" y="289">MOBILE PLATFORM OR CHAINS TO OPERATE</text>
                <text class="note" x="1651" y="301">THE SPINDLE WILL BE PROVIDED.</text>
                <text class="note" x="1640" y="313">14. DELETED.</text>
                <text class="note" x="1640" y="325">15. ODOROUS AIR TEST PORT LOCATED AT THE</text>
                <text class="note" x="1651" y="337">CROWN AND AT THE HORIZONTAL DUCT/PIPE</text>
                <text class="note" x="1651" y="349">CENTERLINE. REFER TO STANDARD DOCU-</text>
                <text class="note" x="1651" y="361">MENT C15899.</text>
                <path d="M1878 197l10 21h-20z" class="ln w thin"/>
                <text x="1878" y="217" class="dwg mid">A.3</text>
                <path d="M1878 342l10 17h-20z" class="ln w thin"/>
                <text x="1878" y="358" class="dwg mid">A.4</text>
            </svg>
            <div class="ghost">
                <div>Confirm (Enter)</div>
                <div class="ghost-2">Change and Use Selection Helper.</div>
            </div>
        </div>
        <div class="vscroll">
            <svg width="9" height="6"><polyline points="1,5 4.500,1 8,5" fill="none" stroke="#777" stroke-width="1.500"/></svg>
            <div class="thumb"></div>
        </div>
    </div>
</body>
</html>
```

FILE: styles.css
```css
html, body {
    margin: 0;
    padding: 0;
    height: 430px;
    overflow: hidden;
}
body {
    position: relative;
    font-family: "Noto Sans", sans-serif;
    font-size: 11.5px;
    color: #1a1a1a;
    background-color: #d4d4d4;
}
.defs {
    display: none;
}
svg {
    display: block;
    flex: none;
}

/* title bar and tabs */
.top {
    height: 59px;
    background-color: #d4d4d4;
}
.titlebar {
    display: flex;
    height: 30px;
}
.qat {
    display: flex;
    align-items: center;
    width: 758px;
    flex: none;
}
.logo {
    margin-left: 6px;
}
.qat-sep {
    display: block;
    width: 1px;
    height: 28px;
    background-color: #aaa;
    flex: none;
    margin-right: 5px;
}
.qat-sep.first {
    margin-left: 7px;
    margin-right: 4px;
}
.mini {
    margin: 0 3px;
}
.qat-icon.save { margin-left: 2px; }
.qat-icon.print { margin-left: 6px; }
.qat-icon.mail { margin-left: 5px; margin-right: 1px; }
.qat-icon.cloud { margin-left: 1px; margin-right: 1px; }
.qat-icon.undo { margin-right: 2px; }
.qat-icon.redo { margin-left: 3px; margin-right: 2px; }
.qat-icon.back { margin-left: -1px; }
.qat-icon.fwd { margin-left: 6px; }
.ctx-head {
    width: 74px;
    flex: none;
    box-sizing: border-box;
    text-align: center;
    line-height: 32px;
    margin-top: 1px;
    border-top: 2px solid #d2ae2e;
    background-color: #d3cfb4;
}
.doc-title {
    flex: 1;
    text-align: center;
    line-height: 30px;
}
.win-tools {
    display: flex;
    align-items: center;
    box-sizing: border-box;
    width: 364px;
    padding-left: 4px;
    flex: none;
}
.win-tools .qat-sep {
    margin: 0 4px;
}
.win-tools .mini {
    margin: 0 0 0 3px;
}
.quick {
    display: flex;
    align-items: center;
    gap: 4px;
    box-sizing: border-box;
    width: 151px;
    height: 22px;
    padding-left: 3px;
    background-color: #fff;
    border: 1px solid #bbb;
    border-radius: 2px;
    color: #888;
    margin-right: -2px;
}
.ui-icon {
    margin-left: -1px;
}
.ui-icon.full {
    margin-left: 0;
}
.win-btns {
    display: flex;
    gap: 32px;
    margin-left: 12px;
}
.tabs {
    display: flex;
    height: 29px;
    line-height: 29px;
}
.tab-list {
    display: flex;
    width: 758px;
    flex: none;
}
.tab-file {
    width: 53px;
    margin: 0 4px 0 1px;
    text-align: center;
    color: #fff;
    background-color: #ab4a4a;
    border-top-left-radius: 2px;
    border-top-right-radius: 2px;
}
.tab {
    padding: 0 8.650px;
    white-space: nowrap;
}
.tab-home {
    position: relative;
    height: 30px;
    width: 33.700px;
    text-align: center;
    color: #1c3f74;
    background-color: #f3f3f3;
    border-top-left-radius: 3px;
    border-top-right-radius: 3px;
}
.tab-home span {
    display: block;
    height: 27px;
    border-bottom: 2px solid #7fa4c4;
    margin: 0 -3px;
}
.ctx-tab {
    width: 74px;
    text-align: center;
    background-color: #d3cfb4;
    flex: none;
}
.tab-right {
    display: flex;
    align-items: center;
    flex: 1;
    justify-content: flex-end;
    padding-right: 4px;
    gap: 3px;
}
.find {
    margin-right: 3px;
}
.collapse {
    margin-left: 11px;
}

/* ribbon */
.ribbon {
    display: flex;
    height: 98px;
    overflow: hidden;
    border-top: 1px solid #b5b5b5;
    background-color: #f3f3f3;
}
.group {
    display: flex;
    flex-direction: column;
    flex: none;
    box-sizing: border-box;
    border-right: 1px solid #cfcfcf;
    height: 98px;
}
.g-tools { width: 268px; }
.g-view { width: 177px; }
.g-objects { width: 217px; }
.g-comment { width: 268px; }
.g-links { width: 209px; }
.g-protect { width: 66px; }
.group-body {
    display: flex;
    height: 86px;
    padding-top: 2px;
    box-sizing: border-box;
    flex: none;
}
.group-label {
    text-align: center;
    color: #8c8c8c;
    line-height: 13px;
}
.comment-label {
    padding-right: 3px;
}
.big {
    display: flex;
    flex-direction: column;
    align-items: center;
    flex: none;
    text-align: center;
    line-height: 13px;
    white-space: nowrap;
}
.big-icon {
    display: flex;
    align-items: center;
    justify-content: center;
    height: 54px;
    padding-bottom: 1px;
    flex: none;
}
.below-chev {
    margin-top: 6px;
}
.inline-chev {
    display: inline-block;
    margin-left: 2px;
    vertical-align: 1px;
}
.hand {
    width: 48px;
    height: 82px;
    margin-left: 2px;
    background-color: #e5d5a8;
    border: 1px solid #c9b98a;
    border-radius: 2px;
}
.w-select-text { width: 48px; margin-left: 3px; }
.w-select-comments { width: 58px; margin-left: 5px; }
.w-edit-text { width: 48px; margin-left: 5px; }
.w-edit-objects { width: 48px; margin-left: 5px; }
.w-add { width: 48px; margin-left: 6px; }
.w-selection { width: 50px; margin-left: 3px; }
.w-stamp { width: 54px; }
.w-link { width: 52px; margin-left: 4px; }
.w-sign { width: 60px; margin-left: 3px; }
.small-col {
    display: flex;
    flex-direction: column;
    flex: none;
}
.small {
    display: flex;
    align-items: center;
    gap: 4px;
    height: 28px;
    white-space: nowrap;
}
.small .mini {
    margin-left: 3px;
}
.small .corner {
    margin-top: 8px;
    margin-left: 0;
}
.c-tools { margin-left: 5px; }
.c-comment-a { margin-left: 5px; width: 110px; }
.c-comment-b { width: 96px; }
.c-links { margin-left: 1px; }
.c-links .small { gap: 3px; }
.stamp-sep {
    display: block;
    width: 1px;
    height: 84px;
    flex: none;
    background-color: #cfcfcf;
}
.view-body {
    flex-direction: column;
}
.zoom-row {
    display: flex;
    align-items: center;
    gap: 4px;
    height: 26px;
    padding-left: 5px;
}
.combo {
    display: flex;
    align-items: center;
    justify-content: space-between;
    box-sizing: border-box;
    width: 113px;
    height: 22px;
    padding: 0 4px;
    background-color: #fff;
    border: 1px solid #bbb;
    border-radius: 2px;
}
.icon-row {
    display: flex;
    align-items: center;
    height: 28px;
    padding-left: 1px;
}
.cell {
    display: flex;
    justify-content: center;
    width: 28px;
    flex: none;
}
.cell.wide {
    width: 29px;
}
.v-sep {
    display: block;
    width: 1px;
    height: 28px;
    flex: none;
    margin-left: 1px;
    background-color: #cfcfcf;
}

/* icon text */
.svg-t {
    font-family: "Liberation Serif", serif;
    font-weight: bold;
    text-anchor: middle;
    fill: #555;
}
.t-big { font-size: 27px; }
.t-huge { font-size: 34px; }
.t-mid { font-size: 16px; }
.t-mark { font-size: 22px; fill: #444; }
.t-small { font-size: 12px; fill: #333; }
.t-one {
    font-family: "Liberation Sans", sans-serif;
    font-weight: normal;
    font-size: 8px;
    fill: #2f8fe6;
}

/* green document band */
.band {
    display: flex;
    align-items: flex-end;
    position: relative;
    box-sizing: border-box;
    height: 40px;
    padding-left: 1px;
    border: 2px solid #0a8a0a;
    border-left-width: 1px;
    border-right-width: 1px;
    background: linear-gradient(#4f7552 0, #5f8962 3px, #5f8962 34px, #b0cc82 34px);
}
.doc-tab {
    position: relative;
    box-sizing: border-box;
    width: 164px;
    height: 33px;
    padding: 7px 0 0 4px;
    background-color: #b0cc82;
    border-top-left-radius: 3px;
    border-top-right-radius: 3px;
    font-size: 11.300px;
    line-height: 17px;
}
.doc-tab::after {
    content: "";
    position: absolute;
    left: 4px;
    right: 5px;
    bottom: 1px;
    height: 2px;
    background-color: #7a9a5a;
}
.doc-close {
    position: absolute;
    right: 5px;
    top: 5px;
}
.new-tab {
    display: flex;
    align-items: center;
    justify-content: center;
    width: 27px;
    height: 27px;
    margin: 0 0 2px 3px;
    background-color: #84ab88;
    border-radius: 2px;
}
.band-close {
    display: flex;
    align-items: center;
    justify-content: center;
    width: 30px;
    height: 29px;
    margin: 0 0 1px auto;
    background-color: #8aae8c;
    border-radius: 2px;
}
.target {
    position: absolute;
    left: 0;
    top: 140px;
    display: flex;
    align-items: center;
    justify-content: center;
    width: 16px;
    height: 18px;
    background-color: #0a8a0a;
    border-top-right-radius: 4px;
}

/* main area */
.main {
    display: flex;
    height: 232px;
    background-color: #fff;
}
.side {
    display: flex;
    flex-direction: column;
    align-items: center;
    gap: 7px;
    box-sizing: border-box;
    width: 31px;
    flex: none;
    margin-left: 1px;
    background-color: #f3f3f3;
    border-right: 2px solid #777;
}
.side-head {
    display: flex;
    align-items: center;
    justify-content: flex-end;
    align-self: stretch;
    height: 9px;
    padding-right: 3px;
    background-color: #e4e4e4;
}
.side-grip {
    width: 26px;
    height: 9px;
    margin-top: -4px;
    background-image: radial-gradient(#aaa 0.6px, transparent 0.7px);
    background-size: 3px 3px;
}
.s1 {
    margin-top: -2px;
}
.canvas {
    position: relative;
    flex: 1;
    overflow: hidden;
}
.canvas::before {
    content: "";
    position: absolute;
    left: 0;
    right: 0;
    top: 0;
    height: 3px;
    background: linear-gradient(#bbb, #fff);
}
.sheet {
    display: block;
}
.ln { fill: none; stroke: #111; stroke-width: 1; }
.ln.w { fill: #fff; }
.ln.thin { stroke-width: 0.9; }
.ln.gray { stroke: #555; }
.ln.heavy { stroke: #666; stroke-width: 1.6; }
.ln.mid-w { stroke: #333; stroke-width: 1.4; }
.pipe { fill: none; stroke: #111; stroke-width: 2; }
.pipe-s { fill: none; stroke: #111; stroke-width: 1.7; }
.riser { fill: none; stroke: #000; stroke-width: 3; }
.fill { fill: #111; }
.dwg {
    font-family: "Liberation Sans", sans-serif;
    font-size: 9px;
    fill: #222;
}
.dwg.mid { text-anchor: middle; }
.dwg.star { font-size: 15px; }
.note {
    font-family: "Liberation Sans", sans-serif;
    font-size: 10.500px;
    fill: #222;
}
.ghost {
    position: absolute;
    left: 1641px;
    top: 39px;
    box-sizing: border-box;
    width: 242px;
    height: 53px;
    padding: 10px 0 0 13px;
    border: 1px solid rgba(200, 200, 200, 0.45);
    background-color: rgba(240, 240, 240, 0.45);
    color: rgba(90, 90, 90, 0.3);
    white-space: nowrap;
}
.ghost-2 {
    margin-top: 3px;
    padding-left: 25px;
}
.vscroll {
    display: flex;
    flex-direction: column;
    align-items: center;
    box-sizing: border-box;
    width: 16px;
    flex: none;
    padding-top: 6px;
    background-color: #f3f3f3;
    border-left: 1px solid #aaa;
}
.thumb {
    width: 5px;
    height: 30px;
    margin-top: 195px;
    border-radius: 3px;
    background-color: #999;
}
```
